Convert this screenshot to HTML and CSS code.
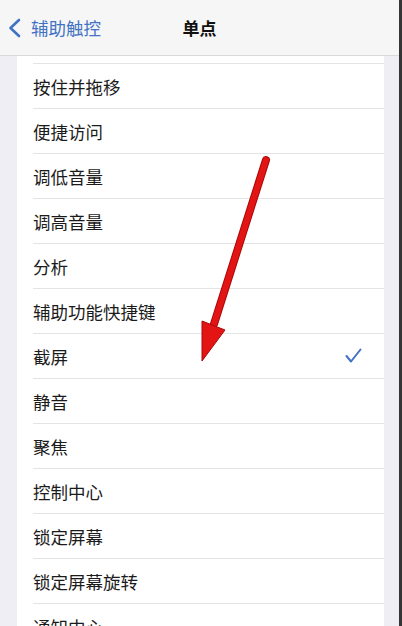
FILE: index.html
```html
<!DOCTYPE html>
<html lang="zh-CN">
<head>
    <meta charset="UTF-8">
    <meta name="viewport" content="width=device-width, initial-scale=1.0">
    <title>单点</title>
    <link rel="stylesheet" href="styles.css">
</head>
<body>
    <div class="screen">
        <div class="phone">
            <header class="nav">
                <div class="nav-back">
                    <svg class="chevron" width="13" height="20" viewBox="0 0 13 20">
                        <polyline points="11,2 2.5,10 11,18" fill="none" stroke="currentColor" stroke-width="2.6" stroke-linecap="round" stroke-linejoin="round"/>
                    </svg>
                    <span>辅助触控</span>
                </div>
                <div class="nav-title">单点</div>
            </header>

            <div class="group">
                <ul class="list">
                    <li class="row row-cut"><div class="row-inner"></div></li>
                    <li class="row"><div class="row-inner"><span>按住并拖移</span></div></li>
                    <li class="row"><div class="row-inner"><span>便捷访问</span></div></li>
                    <li class="row"><div class="row-inner"><span>调低音量</span></div></li>
                    <li class="row"><div class="row-inner"><span>调高音量</span></div></li>
                    <li class="row"><div class="row-inner"><span>分析</span></div></li>
                    <li class="row"><div class="row-inner"><span>辅助功能快捷键</span></div></li>
                    <li class="row">
                        <div class="row-inner">
                            <span>截屏</span>
                            <svg class="check" width="17" height="16" viewBox="0 0 17 16">
                                <polyline points="1.5,8 6,13.5 15.5,1.5" fill="none" stroke="currentColor" stroke-width="2" stroke-linecap="round" stroke-linejoin="round"/>
                            </svg>
                        </div>
                    </li>
                    <li class="row"><div class="row-inner"><span>静音</span></div></li>
                    <li class="row"><div class="row-inner"><span>聚焦</span></div></li>
                    <li class="row"><div class="row-inner"><span>控制中心</span></div></li>
                    <li class="row"><div class="row-inner"><span>锁定屏幕</span></div></li>
                    <li class="row"><div class="row-inner"><span>锁定屏幕旋转</span></div></li>
                    <li class="row"><div class="row-inner"><span>通知中心</span></div></li>
                </ul>
            </div>

            <!-- red annotation arrow drawn over the list -->
            <svg class="arrow" width="399" height="626" viewBox="0 0 399 626">
                <line x1="266" y1="160" x2="214" y2="324" stroke="#a80808" stroke-width="8" stroke-linecap="round"/>
                <line x1="266" y1="160" x2="214" y2="324" stroke="#e31414" stroke-width="6" stroke-linecap="round"/>
                <polygon points="202,321 225,330 202,361" fill="#e31414" stroke="#a80808" stroke-width="1" stroke-linejoin="round"/>
            </svg>
        </div>
        <div class="edge"></div>
    </div>
</body>
</html>
```

FILE: styles.css
```css
body {
    margin: 0;
    padding: 0;
    overflow: hidden;
    font-family: "Noto Sans CJK SC", "Noto Sans", sans-serif;
    color: #1b1b1b;
}

.screen {
    display: flex;
    height: 626px;
    overflow: hidden;
}

.phone {
    position: relative;
    flex: 1;
    background: #efeef4;
    overflow: hidden;
}

.edge {
    width: 3px;
    background: #353535;
}

.nav {
    position: relative;
    height: 55px;
    background: #f6f6f6;
    border-bottom: 1px solid #dadada;
    display: flex;
    align-items: center;
}

.nav-back {
    display: flex;
    align-items: center;
    gap: 10px;
    padding-left: 8px;
    color: #4272c4;
    font-size: 17.5px;
}

.chevron {
    display: block;
}

.nav-title {
    position: absolute;
    left: 0;
    right: 0;
    top: 0;
    bottom: 0;
    display: flex;
    align-items: center;
    justify-content: center;
    font-size: 17px;
    font-weight: 700;
    color: #111;
    pointer-events: none;
}

.group {
    padding: 0 15px 0 17px;
}

.list {
    list-style: none;
    margin: 0;
    padding: 0;
    background: #fff;
}

.row {
    padding-left: 16px;
}

.row-inner {
    height: 44px;
    border-bottom: 1px solid #e4e4e7;
    display: flex;
    align-items: center;
    justify-content: space-between;
    padding-right: 22px;
    font-size: 17.5px;
}

.row-cut .row-inner {
    height: 7px;
}

.check {
    display: block;
    color: #4272c4;
}

.arrow {
    position: absolute;
    left: 0;
    top: 0;
    pointer-events: none;
}
```
